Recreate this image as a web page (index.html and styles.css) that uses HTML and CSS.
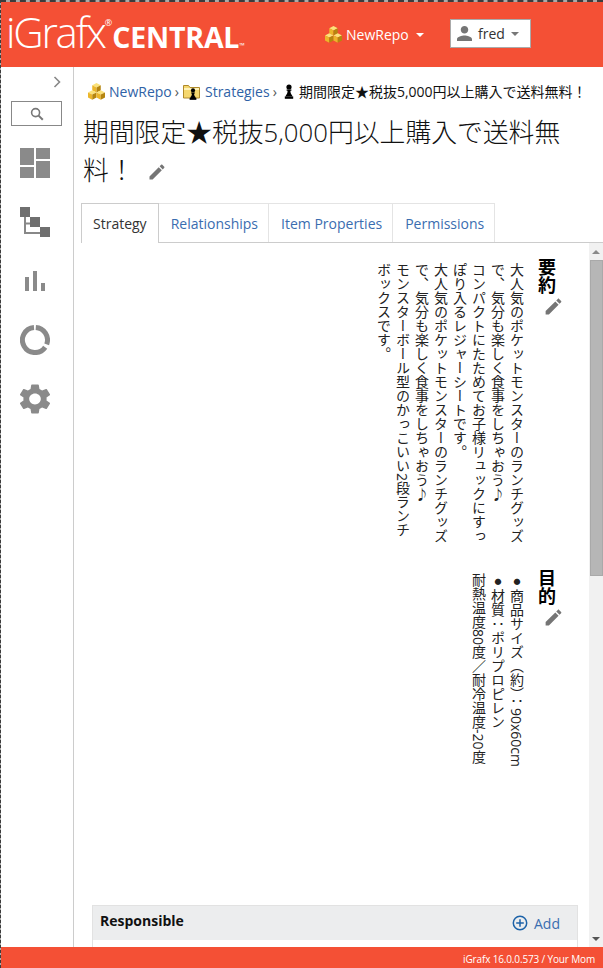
FILE: index.html
```html
<!DOCTYPE html>
<html lang="ja">
<head>
<meta charset="utf-8">
<title>iGrafx Central</title>
<link rel="stylesheet" href="styles.css">
</head>
<body>
<svg class="defs" width="0" height="0" aria-hidden="true">
  <defs>
    <g id="cube-shape">
      <polygon points="0,2.2 4.25,0 8.5,2.2 4.25,4.4" fill="#fbe27a"/>
      <polygon points="0,2.2 4.25,4.4 4.25,9.6 0,7.4" fill="#ecb62a"/>
      <polygon points="8.5,2.2 4.25,4.4 4.25,9.6 8.5,7.4" fill="#b5850f"/>
    </g>
    <symbol id="cubes" viewBox="0 0 17 17">
      <use href="#cube-shape" x="4.25" y="0"/>
      <use href="#cube-shape" x="0" y="7.2"/>
      <use href="#cube-shape" x="8.5" y="7.2"/>
    </symbol>
    <symbol id="pawn" viewBox="0 0 10 15">
      <circle cx="5" cy="3" r="2.6" fill="#000"/>
      <path d="M2.6 5.6h4.8v1.2H6.4c0 2 .7 3.6 1.8 4.6v1H1.8v-1c1.1-1 1.8-2.6 1.8-4.6H2.6z" fill="#000"/>
      <rect x="0.8" y="12.4" width="8.4" height="2.4" fill="#000"/>
    </symbol>
    <symbol id="pencil" viewBox="0 0 24 24">
      <path d="M3 17.25V21h3.75L17.81 9.94l-3.75-3.75L3 17.25zM20.71 7.04c.39-.39.39-1.02 0-1.41l-2.34-2.34c-.39-.39-1.02-.39-1.41 0l-1.83 1.83 3.75 3.75 1.83-1.83z" fill="#757575"/>
    </symbol>
  </defs>
</svg>
<div class="page">
  <header class="topbar">
    <div class="logo"><span class="logo-i">iGrafx</span><span class="logo-r">®</span><span class="logo-c">CENTRAL</span><span class="logo-tm">™</span></div>
    <div class="repo">
      <svg class="ico-cubes"><use href="#cubes"/></svg>
      <span>NewRepo</span>
      <span class="caret caret-white"></span>
    </div>
    <div class="user">
      <svg class="ico-user" viewBox="4 4 16 16"><path d="M12 12c2.21 0 4-1.79 4-4s-1.79-4-4-4-4 1.79-4 4 1.79 4 4 4zm0 2c-2.67 0-8 1.34-8 4v2h16v-2c0-2.66-5.33-4-8-4z" fill="#757575"/></svg>
      <span>fred</span>
      <span class="caret caret-grey"></span>
    </div>
  </header>
  <div class="main">
    <nav class="sidebar">
      <svg class="chevron" viewBox="0 0 8 12"><path d="M1.5 1l5 5-5 5" fill="none" stroke="#888" stroke-width="1.6"/></svg>
      <div class="search">
        <svg viewBox="0 0 14 14" class="ico-search"><circle cx="5.6" cy="5.6" r="4" fill="none" stroke="#777" stroke-width="1.6"/><path d="M8.6 8.6l4.2 4.2" stroke="#777" stroke-width="2"/></svg>
      </div>
      <div class="sideicons">
        <svg class="sideicon" viewBox="0 0 30 30"><g fill="#8a8a8a"><rect width="14" height="17"/><rect x="16" width="14" height="11"/><rect y="19" width="14" height="11"/><rect x="16" y="13" width="14" height="17"/></g></svg>
        <svg class="sideicon" viewBox="0 0 30 30"><path d="M5 10v16h16M5 16.5h6" fill="none" stroke="#888" stroke-width="2"/><g fill="#6f6f6f"><rect width="10" height="10"/><rect x="10" y="10" width="10" height="10"/><rect x="20" y="20" width="10" height="10"/></g></svg>
        <svg class="sideicon" viewBox="0 0 30 30"><g fill="#8a8a8a"><rect x="5" y="11" width="4" height="14"/><rect x="13" y="5" width="4" height="20"/><rect x="21" y="17" width="4" height="8"/></g></svg>
        <svg class="sideicon" viewBox="0 0 30 30"><g fill="none" stroke="#8a8a8a" stroke-width="5"><path d="M15.8 2.5A12.5 12.5 0 0 1 26.7 19.3"/><path d="M25.2 22.2A12.5 12.5 0 1 1 14 2.6"/></g></svg>
        <svg class="sideicon" viewBox="2.7 2 18.6 20" preserveAspectRatio="none"><path d="M19.14 12.94c.04-.3.06-.61.06-.94 0-.32-.02-.64-.07-.94l2.03-1.58c.18-.14.23-.41.12-.61l-1.92-3.32c-.12-.22-.37-.29-.59-.22l-2.39.96c-.5-.38-1.03-.7-1.62-.94l-.36-2.54c-.04-.24-.24-.41-.48-.41h-3.84c-.24 0-.43.17-.47.41l-.36 2.54c-.59.24-1.13.57-1.62.94l-2.39-.96c-.22-.08-.47 0-.59.22L2.74 8.87c-.12.21-.08.47.12.61l2.03 1.58c-.05.3-.09.63-.09.94s.02.64.07.94l-2.03 1.58c-.18.14-.23.41-.12.61l1.92 3.32c.12.22.37.29.59.22l2.39-.96c.5.38 1.03.7 1.62.94l.36 2.54c.05.24.24.41.48.41h3.84c.24 0 .44-.17.47-.41l.36-2.54c.59-.24 1.13-.56 1.62-.94l2.39.96c.22.08.47 0 .59-.22l1.92-3.32c.12-.22.07-.47-.12-.61l-2.01-1.58zM12 15.6c-1.98 0-3.6-1.62-3.6-3.6s1.62-3.6 3.6-3.6 3.6 1.62 3.6 3.6-1.62 3.6-3.6 3.6z" fill="#8a8a8a"/></svg>
      </div>
    </nav>
    <main class="content">
      <div class="crumbs">
        <svg class="ico-cubes"><use href="#cubes"/></svg>
        <a class="crumb-link">NewRepo</a>
        <span class="sep">›</span>
        <svg class="ico-folder" viewBox="0 0 17 17">
          <path d="M0.5 2.5h5l1.5 2h9.5v10.5H0.5z" fill="#f5d76e" stroke="#b08a2a"/>
          <rect x="1" y="5" width="15" height="2" fill="#fff3b8"/>
          <use href="#pawn" x="6" y="5" width="8" height="12"/>
        </svg>
        <a class="crumb-link crumb-strat">Strategies</a>
        <span class="sep">›</span>
        <svg class="ico-pawn"><use href="#pawn"/></svg>
        <span class="crumb-here">期間限定★税抜5,000円以上購入で送料無料！</span>
      </div>
      <h1 class="title">期間限定★税抜5,000円以上購入で送料無料！<svg class="title-edit"><use href="#pencil"/></svg></h1>
      <div class="tabs">
        <a class="tab tab-active">Strategy</a>
        <a class="tab">Relationships</a>
        <a class="tab">Item Properties</a>
        <a class="tab">Permissions</a>
      </div>
      <div class="panel">
        <div class="scroller">
          <section class="vsection vsection-summary">
            <div class="vhead"><h2>要約</h2><svg class="vedit"><use href="#pencil"/></svg></div>
            <p class="vtext">大人気のポケットモンスターのランチグッズで、気分も楽しく食事をしちゃおう♪<br>コンパクトにたためてお子様リュックにすっぽり入るレジャーシートです。<br>大人気のポケットモンスターのランチグッズで、気分も楽しく食事をしちゃおう♪<br>モンスターボール型のかっこいい2段ランチボックスです。</p>
          </section>
          <section class="vsection vsection-goal">
            <div class="vhead"><h2>目的</h2><svg class="vedit"><use href="#pencil"/></svg></div>
            <p class="vtext"><span class="dot">●</span>商品サイズ（約）：90x60cm<br><span class="dot">●</span>材質：ポリプロピレン<br>耐熱温度80度／耐冷温度-20度</p>
          </section>
          <section class="card">
            <div class="card-head">
              <strong>Responsible</strong>
              <a class="add"><svg class="ico-add" viewBox="0 0 16 16"><circle cx="8" cy="8" r="6.7" fill="none" stroke="#1c62a8" stroke-width="1.5"/><path d="M8 4.2v7.6M4.2 8h7.6" stroke="#1c62a8" stroke-width="1.5"/></svg>Add</a>
            </div>
            <div class="card-body"></div>
          </section>
        </div>
        <div class="sbar" aria-hidden="true">
          <div class="sbar-btn"><span class="arrow-up"></span></div>
          <div class="sbar-thumb"></div>
          <div class="sbar-btn sbar-btn-down"><span class="arrow-down"></span></div>
        </div>
      </div>
    </main>
  </div>
  <footer class="footbar">iGrafx 16.0.0.573 / Your Mom</footer>
</div>
</body>
</html>
```
FILE: styles.css
```css
* { box-sizing: border-box; }
html, body { margin: 0; height: 100%; overflow: hidden; }
body { font-family: "Open Sans", "Noto Sans CJK JP", sans-serif; font-size: 14px; color: #333; background: #fff; }
.defs { position: absolute; }
.page { height: 968px; display: flex; flex-direction: column; background: #aaa; border-top: 2px dashed #3c3c3c; border-left: 1px dashed #3c3c3c; }

.topbar { flex: none; height: 65px; background: #f45035; display: flex; align-items: center; color: #fff; }
.logo { display: flex; align-items: baseline; width: 324px; padding: 0 0 6px 5px; line-height: 1; white-space: nowrap; }
.logo-i { font-size: 42px; font-weight: 300; letter-spacing: -2.2px; }
.logo-r { font-size: 9px; align-self: flex-start; margin: 7px 0 0 0; }
.logo-c { font-size: 28.5px; font-weight: 700; letter-spacing: -0.2px; }
.logo-tm { font-size: 7px; }
.repo { display: flex; align-items: center; gap: 4px; width: 125px; font-size: 14px; }
.repo .caret { margin-left: 3px; }
.ico-cubes { width: 17px; height: 17px; flex: none; }
.user { width: 81px; height: 29px; background: #fff; border: 1px solid #aaa; display: flex; align-items: center; color: #333; padding-left: 6px; gap: 6px; margin-top: -2px; }
.ico-user { width: 15px; height: 15px; }
.caret { display: inline-block; width: 0; height: 0; border-left: 4px solid transparent; border-right: 4px solid transparent; }
.caret-white { border-top: 4px solid #fff; }
.caret-grey { border-top: 4px solid #777; }

.main { flex: 1; min-height: 0; display: flex; background: #fff; }
.sidebar { flex: none; width: 73px; border-right: 1px solid #ccc; display: flex; flex-direction: column; align-items: center; padding-top: 9px; }
.chevron { width: 8px; height: 12px; align-self: flex-end; margin-right: 12px; }
.search { width: 51px; height: 25px; border: 1px solid #888; margin: 13px 0 0 -1px; display: flex; align-items: center; justify-content: center; }
.ico-search { width: 14px; height: 14px; }
.sideicons { display: flex; flex-direction: column; gap: 29px; margin: 22px 4px 0 0; }
.sideicon { width: 30px; height: 30px; display: block; }

.content { flex: 1; min-width: 0; display: flex; flex-direction: column; padding-top: 14px; }
.crumbs { display: flex; align-items: center; height: 20px; padding-left: 14px; white-space: nowrap; }
.crumb-link { color: #2f62a6; margin-left: 4px; }
.crumb-strat { margin-left: 5px; }
.sep { color: #555; margin: 0 4px 0 3px; }
.ico-folder { width: 17px; height: 17px; flex: none; }
.ico-pawn { width: 10px; height: 15px; flex: none; margin: 0 5px 0 3px; }
.crumb-here { color: #111; }

.title { margin: 12px 25px 14px 9px; font-size: 25.8px; line-height: 38px; font-weight: 300; color: #111; }
.title-edit { width: 20px; height: 20px; margin-left: 12px; vertical-align: -2px; }

.tabs { flex: none; display: flex; height: 40px; margin-left: 7px; border-bottom: 1px solid #ccc; }
.tab { height: 39px; padding: 0 10px 0 12px; line-height: 39px; color: #3a6db0; border-top: 1px solid #e4e4e4; border-right: 1px solid #e4e4e4; }
.tab-active { color: #333; height: 40px; background: #fff; border: 1px solid #ccc; border-bottom: 0; padding: 0 11px; }

.panel { flex: 1; min-height: 0; display: flex; }
.scroller { flex: 1; min-width: 0; overflow: hidden; }
.sbar { flex: none; width: 14px; background: #f1f1f1; display: flex; flex-direction: column; }
.sbar-btn { flex: none; height: 17px; display: flex; align-items: center; justify-content: center; }
.sbar-btn-down { margin-top: auto; }
.sbar-thumb { flex: none; height: 316px; background: #b6b6b6; margin-left: 1px; border: 1px solid #a9a9a9; }
.arrow-up { width: 0; height: 0; border-left: 4px solid transparent; border-right: 4px solid transparent; border-bottom: 4px solid #8a8a8a; }
.arrow-down { width: 0; height: 0; border-left: 4px solid transparent; border-right: 4px solid transparent; border-top: 4px solid #555; }

.vsection { writing-mode: vertical-rl; color: #222; padding-right: 25px; margin-left: auto; }
.vsection-summary { height: 326px; padding-top: 15px; }
.vsection-goal { height: 336px; }
.vhead { display: flex; align-items: flex-start; width: 38px; gap: 2px; }
.vhead h2 { margin: 0; font-size: 18px; font-weight: 700; line-height: 18px; color: #000; padding-right: 9px; }
.vedit { width: 21px; height: 21px; flex: none; }
.vtext { margin: 0; font-size: 14px; line-height: 19px; padding-top: 5px; height: 288px; }
.vsection-goal .vtext { padding-top: 4px; }
.dot { display: inline-block; font-size: 7px; height: 16px; line-height: 16px; text-align: center; }

.card { margin: 0 11px 0 18px; border: 1px solid #e2e2e2; }
.card-head { height: 34px; background: #ecedee; display: flex; align-items: center; justify-content: space-between; padding: 0 17px 0 7px; }
.card-head strong { color: #111; font-weight: 700; margin-top: -6px; }
.add { display: flex; align-items: center; gap: 6px; color: #3a6db0; }
.ico-add { width: 16px; height: 16px; }
.card-body { height: 800px; }

.footbar { flex: none; height: 21px; background: #f45035; color: #fff; font-size: 10px; letter-spacing: -0.15px; line-height: 24px; text-align: right; padding-right: 8px; white-space: nowrap; }
```
